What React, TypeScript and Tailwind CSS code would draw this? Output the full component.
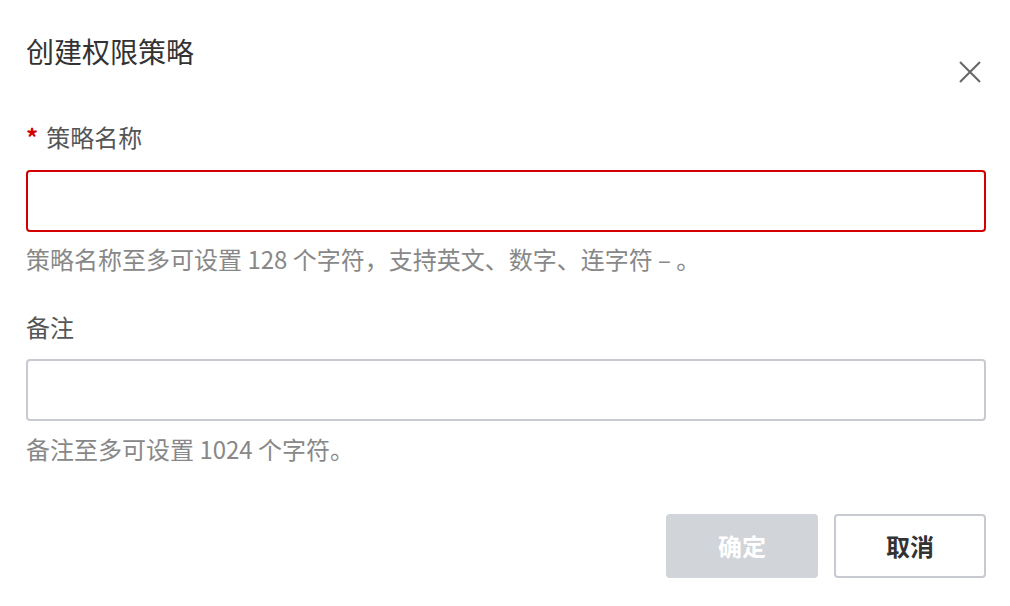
import React from 'react';

export default function App() {
  return (
    <div
      className="w-[1010px] h-[606px] bg-white pl-[26px] pr-[24px] pt-[31px]"
      style={{ fontFamily: '"Noto Sans CJK SC", "Noto Sans", sans-serif' }}
    >
      {/* Header */}
      <div className="flex items-start justify-between h-[50px]">
        <h2 className="text-[28px] leading-[40px] text-[#333]">创建权限策略</h2>
        <button className="mt-[30px] mr-[5px] text-[#666]" aria-label="close">
          <svg width="22" height="22" viewBox="0 0 22 22" fill="none" stroke="currentColor" strokeWidth={2}>
            <path d="M1 1L21 21M21 1L1 21" />
          </svg>
        </button>
      </div>

      {/* Policy name */}
      <div className="mt-[40px] flex items-center text-[24px] leading-[32px] text-[#555]">
        <span className="text-[#d40000] text-[24px] font-bold mr-[8px]">*</span>
        <span>策略名称</span>
      </div>
      <input
        className="mt-[17px] block w-full h-[62px] rounded-[4px] border-2 border-[#d40000] outline-none px-4 text-[24px]"
        type="text"
      />
      <p className="mt-[11px] text-[24px] leading-[32px] text-[#888]">
        策略名称至多可设置 128 个字符，支持英文、数字、连字符 – 。
      </p>

      {/* Remark */}
      <div className="mt-[36px] text-[24px] leading-[32px] text-[#555]">备注</div>
      <input
        className="mt-[16px] block w-full h-[62px] rounded-[4px] border-2 border-[#c7cad0] outline-none px-4 text-[24px]"
        type="text"
      />
      <p className="mt-[12px] text-[24px] leading-[32px] text-[#888]">备注至多可设置 1024 个字符。</p>

      {/* Footer */}
      <div className="mt-[49px] flex justify-end gap-[16px]">
        <button className="w-[152px] h-[64px] rounded-[4px] bg-[#d1d4d9] text-white text-[24px] font-bold">
          确定
        </button>
        <button className="w-[152px] h-[64px] rounded-[4px] border-2 border-[#c7cad0] bg-white text-[#333] text-[24px] font-bold">
          取消
        </button>
      </div>
    </div>
  );
}
